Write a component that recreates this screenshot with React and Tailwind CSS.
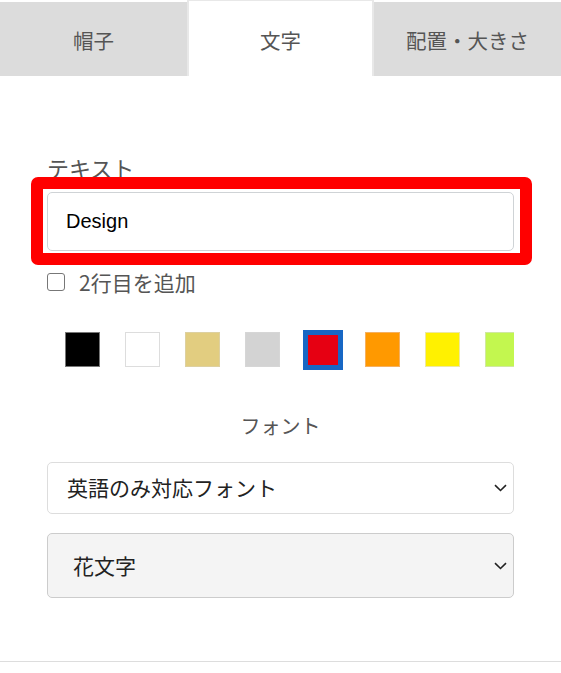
import React, { useState } from 'react';

const jp = { fontFamily: '"Noto Sans CJK JP", "Noto Sans", sans-serif' };

const colors = [
  { bg: 'bg-[#000000]', border: 'border-[#777777]' },
  { bg: 'bg-[#ffffff]', border: 'border-[#dddddd]' },
  { bg: 'bg-[#e2cd80]', border: 'border-[#ddd0a0]' },
  { bg: 'bg-[#d3d3d3]', border: 'border-[#d6d6d6]' },
  { bg: 'bg-[#e60012]', border: 'border-[#e60012]' },
  { bg: 'bg-[#ff9900]', border: 'border-[#f5b060]' },
  { bg: 'bg-[#fff100]', border: 'border-[#eee8a0]' },
  { bg: 'bg-[#c3f74f]', border: 'border-[#d0e8a0]' },
];

const Chevron = () => (
  <svg width="13" height="8" viewBox="0 0 13 8" fill="none">
    <path d="M1 1.2 L6.5 6.5 L12 1.2" stroke="#222" strokeWidth="1.6" />
  </svg>
);

const App = () => {
  const [tab, setTab] = useState(1);
  const [selected, setSelected] = useState(4);
  const tabs = ['帽子', '文字', '配置・大きさ'];

  return (
    <div className="w-[561px] h-[673px] bg-white overflow-hidden" style={jp}>
      <div className="grid grid-cols-3 h-[76px]">
        {tabs.map((t, i) => (
          <button
            key={t}
            onClick={() => setTab(i)}
            className={
              i === tab
                ? 'bg-white border-x-[2px] border-t border-[#e8e8e8] text-[20.5px] text-[#555] pt-[3px]'
                : 'bg-[#dcdcdc] border-t-[2px] border-white text-[20.5px] text-[#555] pt-[3px]'
            }
          >
            {t}
          </button>
        ))}
      </div>

      <div className="px-[47px]">
        <div className="mt-[75px] h-[32px] leading-[32px] text-[22px] text-[#555]">テキスト</div>

        <div className="relative mt-[9px]">
          <input
            defaultValue="Design"
            className="w-full h-[59px] border border-[#cfd3d6] rounded-[5px] px-[18px] text-[20px] text-black outline-none"
            style={{ fontFamily: '"Liberation Sans", Arial, sans-serif' }}
          />
          <div className="absolute -left-[16px] -right-[18px] -top-[15px] -bottom-[14px] border-[12px] border-[#ff0000] rounded-[7px] pointer-events-none" />
        </div>

        <label className="mt-[20px] h-[22px] flex items-center gap-[14px] text-[21px] text-[#555]">
          <span className="w-[18px] h-[18px] border-[1.5px] border-[#777] rounded-[3px] bg-white" />
          <span className="leading-[22px]">2行目を追加</span>
        </label>

        <div className="mt-[34px] py-[5px] pl-[18px] flex gap-[25px] overflow-hidden">
          {colors.map((c, i) => (
            <button
              key={i}
              onClick={() => setSelected(i)}
              className="w-[35px] h-[35px] shrink-0 flex items-center justify-center"
            >
              {i === selected ? (
                <span className={'w-[30px] h-[30px] ring-[5px] ring-[#1767c4] ' + c.bg} />
              ) : (
                <span className={'w-[35px] h-[35px] border ' + c.bg + ' ' + c.border} />
              )}
            </button>
          ))}
        </div>

        <div className="mt-[39px] h-[30px] leading-[30px] text-center text-[20px] text-[#555]">フォント</div>

        <div className="mt-[21px] h-[52px] border border-[#dddddd] rounded-[5px] bg-white flex items-center justify-between pl-[19px] pr-[6px]">
          <span className="text-[21px] text-[#222]">英語のみ対応フォント</span>
          <Chevron />
        </div>

        <div className="mt-[19px] h-[65px] border border-[#cccccc] rounded-[5px] bg-[#f4f4f4] flex items-center justify-between pl-[25px] pr-[6px]">
          <span className="text-[21px] text-[#222]">花文字</span>
          <Chevron />
        </div>
      </div>

      <div className="mt-[63px] border-t border-[#dddddd]" />
    </div>
  );
};

export default App;
